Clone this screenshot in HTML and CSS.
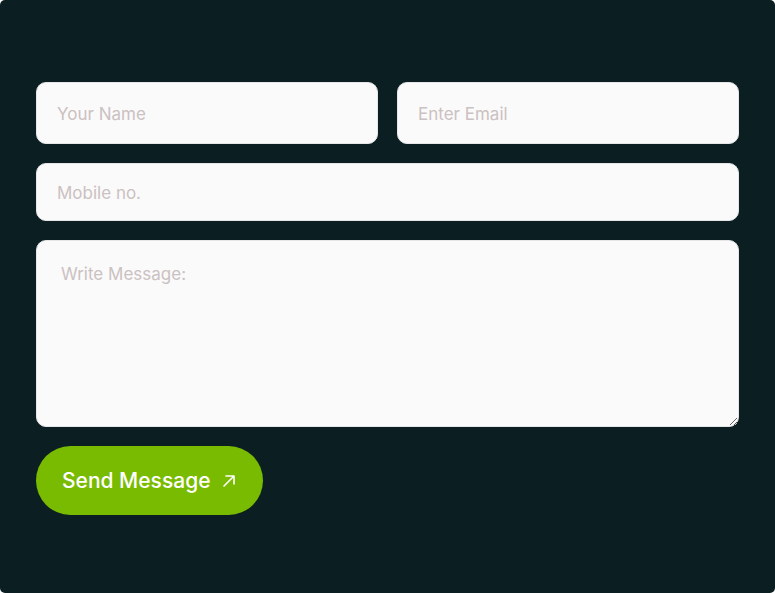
FILE: index.html
```html
<!DOCTYPE html>
<html lang="en">
<head>
<meta charset="utf-8">
<title>Contact form</title>
<link rel="stylesheet" href="styles.css">
</head>
<body>
<section class="panel">
  <form class="form">
    <div class="row two">
      <input class="field tall" type="text" placeholder="Your Name">
      <input class="field tall" type="email" placeholder="Enter Email">
    </div>
    <input class="field" type="tel" placeholder="Mobile no.">
    <textarea class="field area" placeholder="Write Message:"></textarea>
    <div class="actions">
      <button class="send" type="button">Send Message
        <svg class="arrow" width="16" height="16" viewBox="0 0 16 16" fill="none" stroke="currentColor" stroke-width="1.6" stroke-linecap="round" stroke-linejoin="round"><path d="M3 13L13 3M5 3h8v8"/></svg>
      </button>
    </div>
  </form>
</section>
</body>
</html>
```
FILE: styles.css
```css
html, body {
  margin: 0;
  padding: 0;
  background: #ffffff;
}
.panel {
  background: #0b1f22;
  border-radius: 5px;
  min-height: 593px;
  box-sizing: border-box;
  padding: 82px 36px 40px 36px;
  font-family: Inter, "Noto Sans", sans-serif;
}
.form {
  display: flex;
  flex-direction: column;
  gap: 19px;
}
.row.two {
  display: grid;
  grid-template-columns: 1fr 1fr;
  gap: 19px;
}
.field {
  display: block;
  width: 100%;
  box-sizing: border-box;
  height: 58px;
  border: 1px solid #e6e6e8;
  border-radius: 10px;
  background: #fafafb;
  padding: 2px 20px 0 20px;
  font-family: Inter, "Noto Sans", sans-serif;
  font-size: 17px;
  color: #333;
  outline: none;
}
.field.tall {
  height: 62px;
}
.field::placeholder {
  color: #cbc1c1;
  opacity: 1;
}
.area {
  height: 187px;
  padding: 24px 24px;
  resize: vertical;
  line-height: 18px;
}
.actions {
  display: flex;
}
.send {
  display: inline-flex;
  align-items: center;
  gap: 10px;
  height: 69px;
  padding: 0 26px;
  border: none;
  border-radius: 35px;
  background: #79bb00;
  color: #ffffff;
  font-family: Inter, "Noto Sans", sans-serif;
  font-size: 21px;
  font-weight: 500;
  cursor: pointer;
}
.arrow {
  display: block;
}
```
